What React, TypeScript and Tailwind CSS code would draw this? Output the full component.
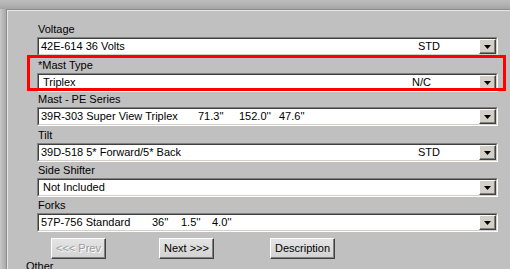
import React from "react";

function DropButton() {
  return (
    <div className="w-[17px] h-[15px] mt-0 bg-[#d4d0c8] border-t border-l border-t-white border-l-white border-b border-r border-b-[#404040] border-r-[#404040] flex items-center justify-center shadow-[inset_-1px_-1px_0_#808080]">
      <svg width="7" height="4" viewBox="0 0 7 4">
        <path d="M0 0h7L3.5 4z" fill="#000" />
      </svg>
    </div>
  );
}

function Combo({ children }: { children: React.ReactNode }) {
  return (
    <div className="h-[19px] w-[461px] bg-white border-t border-l border-t-[#808080] border-l-[#808080] border-b border-r border-b-white border-r-white">
      <div className="h-full border-t border-l border-t-[#404040] border-l-[#404040] border-b border-r border-b-[#d4d0c8] border-r-[#d4d0c8] flex items-center">
        <div className="flex-1 flex items-center pl-[2px] text-black whitespace-nowrap">{children}</div>
        <DropButton />
      </div>
    </div>
  );
}

function Field({ label, children }: { label: string; children: React.ReactNode }) {
  return (
    <div className="flex flex-col">
      <div className="h-[15px] leading-[14px] pl-[1px]">{label}</div>
      <Combo>{children}</Combo>
    </div>
  );
}

function WinButton({ label, width, disabled }: { label: string; width: string; disabled?: boolean }) {
  return (
    <div
      className={`${width} h-[21px] bg-gradient-to-b from-[#e4e4e4] to-[#d2d2d2] border-t border-l border-t-white border-l-white border-b border-r border-b-[#404040] border-r-[#404040] shadow-[inset_-1px_-1px_0_#808080] flex items-center justify-center`}
    >
      {disabled ? (
        <span className="text-[#9a9a9a] [text-shadow:1px_1px_0_#ffffff]">{label}</span>
      ) : (
        <span className="text-black">{label}</span>
      )}
    </div>
  );
}

export default function App() {
  return (
    <div className="w-[510px] h-[269px] overflow-hidden bg-[#c0c0c0] text-[11px] text-black font-['Liberation_Sans',Arial,sans-serif]">
      <div className="h-[9px] bg-gradient-to-b from-[#bcbcbc] via-[#b2b2b2] to-[#a4a4a4]" />
      <div className="flex h-[260px]">
        <div className="w-[6px] bg-gradient-to-r from-[#c8c8c8] to-[#a8a8a8]" />
        <div className="flex-1 border-t border-l border-t-[#8c8c8c] border-l-[#8c8c8c]">
          <div className="h-full border-t border-l border-t-[#e6e6e6] border-l-[#e6e6e6] pl-[29px] pt-[11px] flex flex-col">
            <Field label="Voltage">
              <span className="w-[377px]">42E-614 36 Volts</span>
              <span>STD</span>
            </Field>
            <div className="relative mt-[2px]">
              <div className="absolute -left-[10px] -top-[3px] w-[479px] h-[36px] border-[3px] border-[#ff0000]" />
              <Field label="*Mast Type">
                <span className="w-[371px] pl-[2px]">Triplex</span>
                <span>N/C</span>
              </Field>
            </div>
            <div className="mt-[0px]">
              <Field label="Mast - PE Series">
                <span className="w-[157px]">39R-303 Super View Triplex</span>
                <span className="w-[41px]">71.3''</span>
                <span className="w-[40px]">152.0''</span>
                <span>47.6''</span>
              </Field>
            </div>
            <div className="mt-[2px]">
              <Field label="Tilt">
                <span className="w-[377px]">39D-518 5* Forward/5* Back</span>
                <span>STD</span>
              </Field>
            </div>
            <div className="mt-[1px]">
              <Field label="Side Shifter">
                <span className="pl-[2px]">Not Included</span>
              </Field>
            </div>
            <div className="mt-[1px]">
              <Field label="Forks">
                <span className="w-[111px]">57P-756 Standard</span>
                <span className="w-[29px]">36''</span>
                <span className="w-[31px]">1.5''</span>
                <span>4.0''</span>
              </Field>
            </div>
            <div className="flex mt-[6px] pl-[14px]">
              <WinButton label="<<< Prev" width="w-[55px]" disabled />
              <div className="w-[53px]" />
              <WinButton label="Next >>>" width="w-[55px]" />
              <div className="w-[56px]" />
              <WinButton label="Description" width="w-[65px]" />
            </div>
            <div className="-ml-[11px] mt-[1px] leading-[13px]">Other</div>
          </div>
        </div>
      </div>
    </div>
  );
}
